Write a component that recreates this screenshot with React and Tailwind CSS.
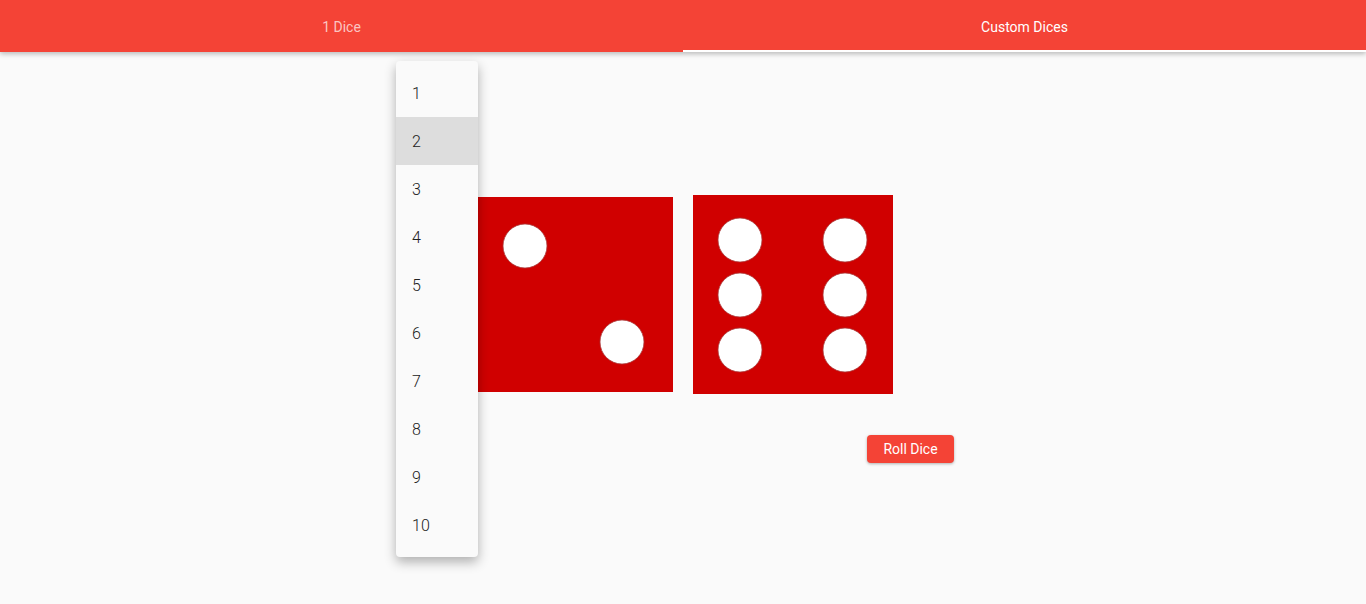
import React from "react"

const font = { fontFamily: "Roboto, 'Liberation Sans', sans-serif" }

function Die({ w, h, pips }) {
  return (
    <svg width={w} height={h} viewBox={`0 0 ${w} ${h}`} className="block shrink-0">
      <rect x="0" y="0" width={w} height={h} fill="#d00000" />
      {pips.map(([cx, cy], i) => (
        <circle key={i} cx={cx} cy={cy} r="22" fill="#ffffff" stroke="#a83a3a" strokeWidth="0.8" />
      ))}
    </svg>
  )
}

const counts = ["1", "2", "3", "4", "5", "6", "7", "8", "9", "10"]

export default function App() {
  return (
    <div className="relative min-h-[604px] bg-[#fafafa] overflow-hidden" style={font}>
      <div className="relative z-10 flex h-[52px] bg-[#f44336] shadow-[0_2px_5px_rgba(0,0,0,0.26)]">
        <button className="flex-1 flex items-center justify-center text-sm text-white/70 pt-[2px]">1 Dice</button>
        <button className="flex-1 flex items-center justify-center text-sm text-white border-b-2 border-white pt-[3px]">
          Custom Dices
        </button>
      </div>

      <div className="pt-[143px] flex justify-center pl-[3px] items-center gap-5">
        <Die w={197} h={195} pips={[[49, 49], [146, 145]]} />
        <Die
          w={200}
          h={199}
          pips={[
            [47, 45], [152, 45],
            [47, 100], [152, 100],
            [47, 155], [152, 155],
          ]}
        />
      </div>

      <div className="pt-[41px] pl-[867px]">
        <button className="h-7 w-[87px] rounded bg-[#f44336] text-sm text-white shadow-[0_1px_3px_rgba(0,0,0,0.3)]">
          Roll Dice
        </button>
      </div>

      <div className="absolute left-[396px] top-[61px] z-20 w-[82px] rounded-sm bg-[#fafafa] py-2 shadow-[0_5px_12px_rgba(0,0,0,0.3)]">
        {counts.map((n) => (
          <div
            key={n}
            className={`h-12 flex items-center px-4 pt-[2px] text-base font-light text-[#212121] ${n === "2" ? "bg-[#dddddd]" : ""}`}
          >
            {n}
          </div>
        ))}
      </div>
    </div>
  )
}
